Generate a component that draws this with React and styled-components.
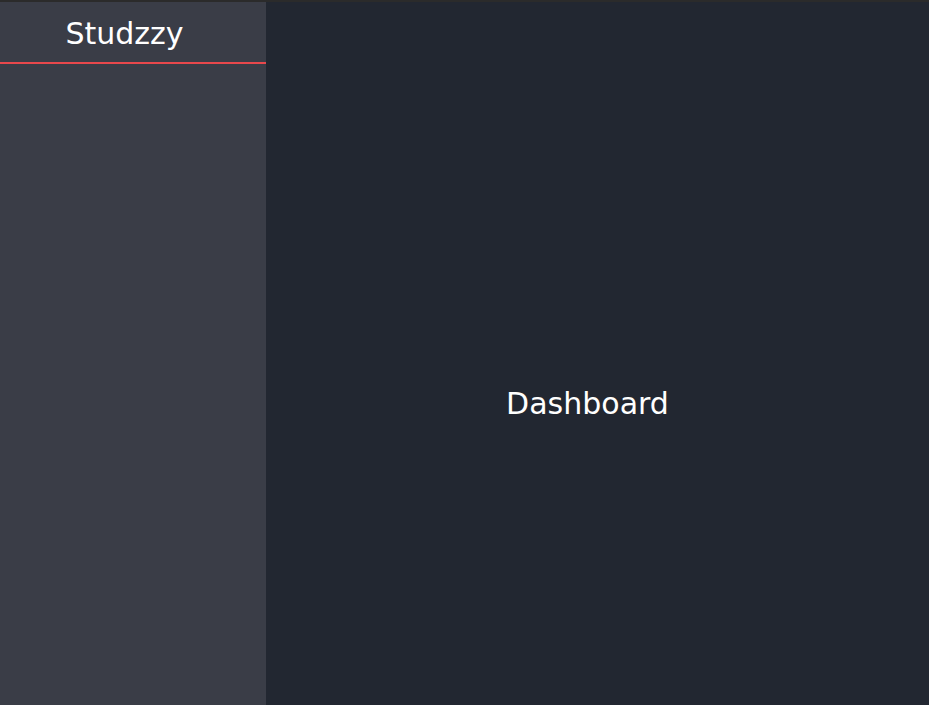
import React from 'react';
import styled, { createGlobalStyle } from 'styled-components';

const GlobalStyle = createGlobalStyle`
  html, body {
    margin: 0;
    padding: 0;
    background: #222731;
    font-family: 'DejaVu Sans', sans-serif;
  }
`;

const Layout = styled.div`
  display: flex;
  height: 705px;
  border-top: 2px solid #2b2b2b;
  box-sizing: border-box;
`;

const Sidebar = styled.aside`
  width: 266px;
  flex-shrink: 0;
  background: #3a3d47;
`;

const Brand = styled.div`
  height: 62px;
  box-sizing: border-box;
  display: flex;
  align-items: center;
  justify-content: center;
  padding: 3px 17px 0 0;
  border-bottom: 2px solid #e8484c;
  color: #ffffff;
  font-size: 30px;
`;

const Main = styled.main`
  flex: 1;
  display: flex;
  align-items: center;
  justify-content: center;
  padding: 100px 20px 0 0;
  color: #ffffff;
  font-size: 30px;
`;

export default function App() {
  return (
    <>
      <GlobalStyle />
      <Layout>
        <Sidebar>
          <Brand>Studzzy</Brand>
        </Sidebar>
        <Main>Dashboard</Main>
      </Layout>
    </>
  );
}
